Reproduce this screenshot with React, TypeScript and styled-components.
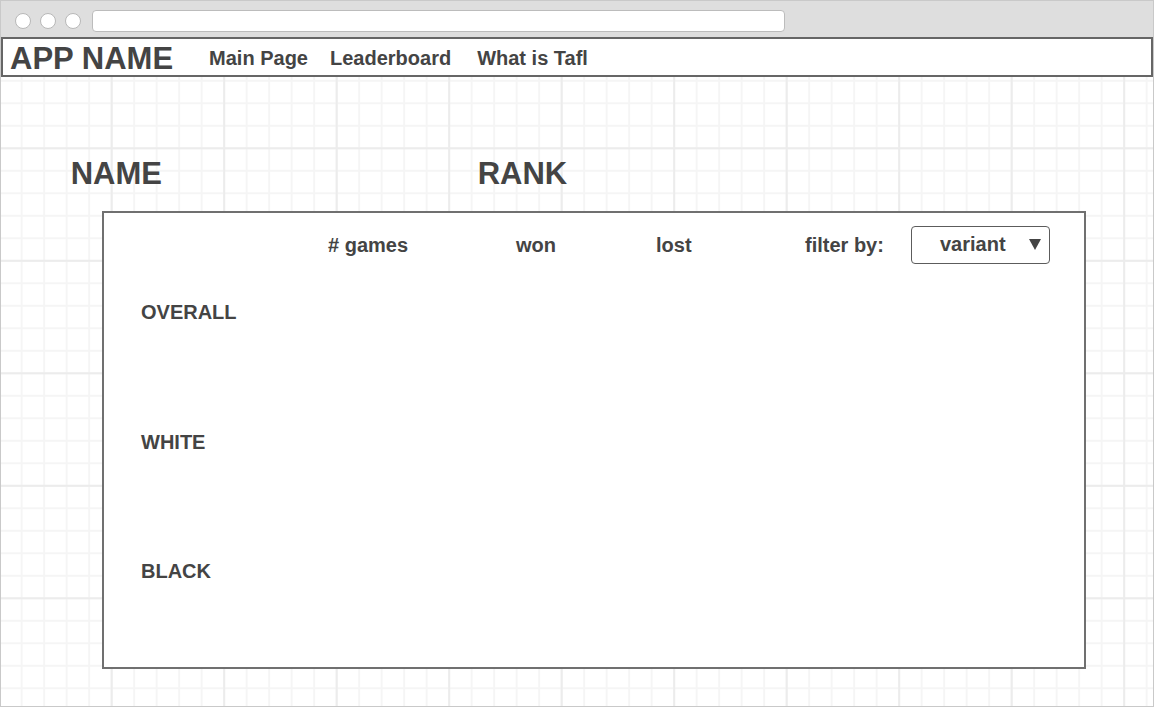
import React from "react";
import styled, { createGlobalStyle } from "styled-components";

const GlobalStyle = createGlobalStyle`
  html, body { margin: 0; padding: 0; background: #fff; }
  body { font-family: "Liberation Sans", Arial, sans-serif; color: #444; }
  * { box-sizing: border-box; }
`;

const Frame = styled.div`
  width: 1154px;
  height: 707px;
  border: 1px solid #c9c9c9;
  display: flex;
  flex-direction: column;
  overflow: hidden;
`;

const Chrome = styled.div`
  height: 36px;
  flex: none;
  background: #dedede;
  display: flex;
  align-items: center;
  padding: 4px 0 0 13.5px;
`;

const Dot = styled.span`
  width: 16px;
  height: 16px;
  border-radius: 50%;
  background: #fff;
  border: 1.5px solid #b8b8b8;
  margin-right: 9px;
  flex: none;
`;

const AddressBar = styled.div`
  width: 693px;
  height: 22px;
  margin-left: 2.5px;
  background: #fff;
  border: 1px solid #bcbcbc;
  border-radius: 4px;
`;

const NavBar = styled.nav`
  height: 40px;
  flex: none;
  background: #fff;
  border: 2px solid #666;
  display: flex;
  align-items: center;
  padding-left: 7px;
`;

const AppName = styled.div`
  font-size: 31px;
  font-weight: 700;
  line-height: 36px;
  color: #444;
  padding-top: 4px;
`;

const NavLinks = styled.div`
  display: flex;
  margin-left: 36px;
  padding-top: 3px;
`;

const NavLink = styled.span<{ $gap?: number }>`
  font-size: 20px;
  font-weight: 700;
  line-height: 23px;
  color: #444;
  margin-left: ${(p) => p.$gap ?? 0}px;
`;

const Canvas = styled.main`
  flex: 1;
  padding: 79.4px 0 0 0;
  background:
    linear-gradient(to right, #ececec 2px, transparent 2px) 109.7px 0 / 112.5px 100%,
    linear-gradient(to bottom, #ececec 2px, transparent 2px) 0 70.3px / 100% 112.5px,
    linear-gradient(to right, #f5f5f5 2px, transparent 2px) 19.7px 0 / 22.5px 100%,
    linear-gradient(to bottom, #f5f5f5 2px, transparent 2px) 0 2.8px / 100% 22.5px,
    #fff;
`;

const HeadingRow = styled.div`
  display: grid;
  grid-template-columns: 407px auto;
  padding-left: 69.7px;
`;

const Heading = styled.h1`
  margin: 0;
  font-size: 31px;
  font-weight: 700;
  line-height: 36px;
  color: #444;
`;

const Card = styled.section`
  margin: 18.6px 0 0 101px;
  width: 984px;
  height: 458px;
  background: #fff;
  border: 2px solid #707070;
  padding-top: 13px;
`;

const Row = styled.div`
  display: grid;
  grid-template-columns: 187px 188px 140px 149px 106px 139px;
  padding-left: 37px;
  align-items: center;
  height: 38px;
`;

const ColLabel = styled.span`
  font-size: 20px;
  font-weight: 700;
  line-height: 23px;
  color: #444;
  padding-top: 2px;
`;

const Select = styled.div`
  height: 38px;
  border: 1px solid #5c5c5c;
  border-radius: 4px;
  display: flex;
  align-items: center;
  padding: 0 8px 0 28px;
  font-size: 20px;
  font-weight: 700;
  color: #444;
`;

const Arrow = styled.svg`
  margin-left: auto;
  margin-top: -1px;
`;

const Body = styled.div`
  display: grid;
  grid-template-rows: 130px 129px 129px;
  padding: 37px 0 0 37px;
`;

const RowLabel = styled.div`
  font-size: 20px;
  font-weight: 700;
  line-height: 23px;
  color: #444;
`;

export default function App() {
  return (
    <>
      <GlobalStyle />
      <Frame>
        <Chrome>
          <Dot />
          <Dot />
          <Dot />
          <AddressBar />
        </Chrome>
        <NavBar>
          <AppName>APP NAME</AppName>
          <NavLinks>
            <NavLink>Main Page</NavLink>
            <NavLink $gap={22}>Leaderboard</NavLink>
            <NavLink $gap={26}>What is Tafl</NavLink>
          </NavLinks>
        </NavBar>
        <Canvas>
          <HeadingRow>
            <Heading>NAME</Heading>
            <Heading>RANK</Heading>
          </HeadingRow>
          <Card>
            <Row>
              <span />
              <ColLabel># games</ColLabel>
              <ColLabel>won</ColLabel>
              <ColLabel>lost</ColLabel>
              <ColLabel>filter by:</ColLabel>
              <Select>
                variant
                <Arrow width="12" height="11" viewBox="0 0 12 11">
                  <polygon points="0,0 12,0 6,11" fill="#444" />
                </Arrow>
              </Select>
            </Row>
            <Body>
              <RowLabel>OVERALL</RowLabel>
              <RowLabel>WHITE</RowLabel>
              <RowLabel>BLACK</RowLabel>
            </Body>
          </Card>
        </Canvas>
      </Frame>
    </>
  );
}
